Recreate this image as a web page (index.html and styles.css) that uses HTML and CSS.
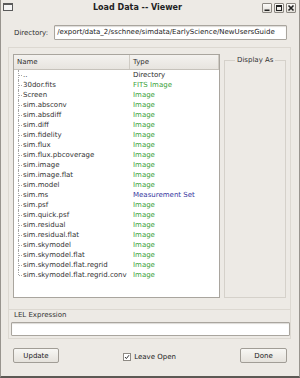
FILE: index.html
```html
<!DOCTYPE html>
<html lang="en">
<head>
    <meta charset="UTF-8">
    <title>Load Data -- Viewer</title>
    <link rel="stylesheet" href="styles.css">
</head>
<body>
    <div class="window">
        <div class="titlebar">
            <div class="win-icon"></div>
            <div class="title">Load Data -- Viewer</div>
            <div class="win-buttons">
                <span class="win-btn">
                    <svg width="8" height="8" viewBox="0 0 8 8"><rect x="1.5" y="5.5" width="5" height="1.5" fill="#222"/></svg>
                </span>
                <span class="win-btn">
                    <svg width="8" height="8" viewBox="0 0 8 8"><rect x="1.5" y="1.5" width="5" height="5" fill="none" stroke="#222" stroke-width="1"/><rect x="1.5" y="1.5" width="5" height="1.5" fill="#222"/></svg>
                </span>
                <span class="win-btn">
                    <svg width="8" height="8" viewBox="0 0 8 8"><path d="M1.5 1.5 L6.5 6.5 M6.5 1.5 L1.5 6.5" stroke="#222" stroke-width="1.6"/></svg>
                </span>
            </div>
        </div>

        <div class="dir-row">
            <label class="dir-label">Directory:</label>
            <div class="text-input dir-input">/export/data_2/sschnee/simdata/EarlyScience/NewUsersGuide</div>
        </div>

        <div class="main">
            <div class="tree">
                <div class="tree-header">
                    <div class="col-name">Name</div>
                    <div class="col-type">Type</div>
                    <div class="col-rest"></div>
                </div>
                <div class="tree-body">
                    <div class="row"><span class="name">..</span><span class="type">Directory</span></div>
                    <div class="row"><span class="name">30dor.fits</span><span class="type img">FITS Image</span></div>
                    <div class="row"><span class="name">Screen</span><span class="type img">Image</span></div>
                    <div class="row"><span class="name">sim.absconv</span><span class="type img">Image</span></div>
                    <div class="row"><span class="name">sim.absdiff</span><span class="type img">Image</span></div>
                    <div class="row"><span class="name">sim.diff</span><span class="type img">Image</span></div>
                    <div class="row"><span class="name">sim.fidelity</span><span class="type img">Image</span></div>
                    <div class="row"><span class="name">sim.flux</span><span class="type img">Image</span></div>
                    <div class="row"><span class="name">sim.flux.pbcoverage</span><span class="type img">Image</span></div>
                    <div class="row"><span class="name">sim.image</span><span class="type img">Image</span></div>
                    <div class="row"><span class="name">sim.image.flat</span><span class="type img">Image</span></div>
                    <div class="row"><span class="name">sim.model</span><span class="type img">Image</span></div>
                    <div class="row"><span class="name">sim.ms</span><span class="type ms">Measurement Set</span></div>
                    <div class="row"><span class="name">sim.psf</span><span class="type img">Image</span></div>
                    <div class="row"><span class="name">sim.quick.psf</span><span class="type img">Image</span></div>
                    <div class="row"><span class="name">sim.residual</span><span class="type img">Image</span></div>
                    <div class="row"><span class="name">sim.residual.flat</span><span class="type img">Image</span></div>
                    <div class="row"><span class="name">sim.skymodel</span><span class="type img">Image</span></div>
                    <div class="row"><span class="name">sim.skymodel.flat</span><span class="type img">Image</span></div>
                    <div class="row"><span class="name">sim.skymodel.flat.regrid</span><span class="type img">Image</span></div>
                    <div class="row last"><span class="name">sim.skymodel.flat.regrid.conv</span><span class="type img">Image</span></div>
                </div>
            </div>

            <fieldset class="display-as">
                <legend>Display As</legend>
            </fieldset>
        </div>

        <div class="lel-group">
            <div class="lel-label">LEL Expression</div>
            <div class="text-input lel-input"></div>
        </div>

        <div class="bottom-row">
            <button class="btn">Update</button>
            <div class="check">
                <span class="check-box">
                    <svg width="6" height="6" viewBox="0 0 6 6"><path d="M1 3 L2.4 4.6 L5 1.2" fill="none" stroke="#333" stroke-width="1"/></svg>
                </span>
                <span>Leave Open</span>
            </div>
            <button class="btn">Done</button>
        </div>
    </div>
</body>
</html>
```

FILE: styles.css
```css
* {
    box-sizing: border-box;
}
body {
    margin: 0;
    font-family: "DejaVu Sans", sans-serif;
    font-size: 7px;
    color: #2e2e2e;
}
.window {
    width: 300px;
    height: 378px;
    background: #edeae5;
    border-left: 1px solid #98948e;
    border-right: 1px solid #98948e;
    border-bottom: 2px solid #5c5954;
    display: flex;
    flex-direction: column;
}

/* title bar */
.titlebar {
    height: 16px;
    display: flex;
    align-items: center;
    padding: 0 3px 0 2px;
}
.win-icon {
    width: 10px;
    height: 8px;
    border: 1px solid #5a5a5a;
    border-top-width: 2px;
    background: #f4f4f4;
    margin-top: -2px;
}
.title {
    flex: 1;
    text-align: center;
    font-weight: bold;
    font-size: 8px;
    color: #222;
    margin-top: -2px;
}
.win-buttons {
    display: flex;
    gap: 2px;
}
.win-btn {
    width: 10px;
    height: 10px;
    border: 1px solid #8c8882;
    border-radius: 1px;
    background: linear-gradient(#fbfaf8, #e2dfd9);
    display: flex;
    align-items: center;
    justify-content: center;
}

/* directory */
.dir-row {
    display: flex;
    align-items: center;
    gap: 6px;
    padding: 9px 12px 0 13px;
}
.text-input {
    background: #fff;
    border: 1px solid #a9a59e;
    border-radius: 1px;
    box-shadow: inset 0 1px 1px #dcdad6;
}
.dir-input {
    flex: 1;
    height: 15px;
    line-height: 13px;
    padding-left: 2px;
    color: #222;
    white-space: nowrap;
    overflow: hidden;
}

/* main area */
.main {
    display: flex;
    gap: 4px;
    margin: 7px 8px 0 7px;
    border: 1px solid #dcd8d1;
    border-bottom: none;
    padding: 6px 4px 11px 4px;
}
.tree {
    width: 207px;
    height: 244px;
    background: #fff;
    border: 1px solid #a9a59e;
    display: flex;
    flex-direction: column;
}
.tree-header {
    display: flex;
    height: 15px;
    background: linear-gradient(#f4f2ef, #e7e4df);
    border-bottom: 1px solid #c6c2bb;
    line-height: 14px;
}
.col-name {
    width: 116px;
    padding-left: 3px;
    border-right: 1px solid #cfcbc4;
}
.col-type {
    width: 89px;
    padding-left: 3px;
    border-right: 1px solid #cfcbc4;
}
.col-rest {
    flex: 1;
}
.row {
    position: relative;
    display: flex;
    height: 10px;
    line-height: 10px;
    white-space: nowrap;
}
.row::before {
    content: "";
    position: absolute;
    left: 4px;
    top: 0;
    height: 10px;
    border-left: 1px dotted #a6a6a6;
}
.row.last::before {
    height: 5px;
}
.row::after {
    content: "";
    position: absolute;
    left: 5px;
    top: 5px;
    width: 3px;
    border-top: 1px dotted #a6a6a6;
}
.name {
    width: 116px;
    padding-left: 9px;
    color: #333;
}
.type {
    padding-left: 3px;
    color: #2b2b2b;
}
.type.img {
    color: #3a9f3a;
}
.type.ms {
    color: #3636a0;
}
.display-as {
    margin: 2px 0 0 0;
    padding: 0;
    width: 62px;
    height: 242px;
    border: 1px solid #d5d1ca;
    min-width: 0;
}
.display-as legend {
    margin-left: 10px;
    padding: 0 2px;
    line-height: 8px;
    color: #333;
}

/* LEL expression */
.lel-group {
    margin: 0 8px 0 7px;
    border: 1px solid #dcd8d1;
    padding: 0 0 2px 2px;
}
.lel-label {
    line-height: 8px;
    margin-top: 1px;
    padding-left: 3px;
    color: #333;
}
.lel-input {
    height: 14px;
    margin-top: 3px;
}

/* buttons */
.bottom-row {
    display: flex;
    justify-content: space-between;
    align-items: center;
    padding: 9px 12px 0 12px;
}
.btn {
    height: 15px;
    width: 46px;
    padding: 0;
    font-family: "DejaVu Sans", sans-serif;
    font-size: 7px;
    color: #222;
    border: 1px solid #a19d96;
    border-radius: 2px;
    background: linear-gradient(#f8f7f4, #e5e2dc);
}
.btn:last-child {
    width: 47px;
}
.check {
    display: flex;
    align-items: center;
    gap: 3px;
    color: #222;
    margin-top: 2px;
}
.check-box {
    width: 8px;
    height: 8px;
    border: 1px solid #8e8a84;
    background: #fff;
    display: flex;
}
```
